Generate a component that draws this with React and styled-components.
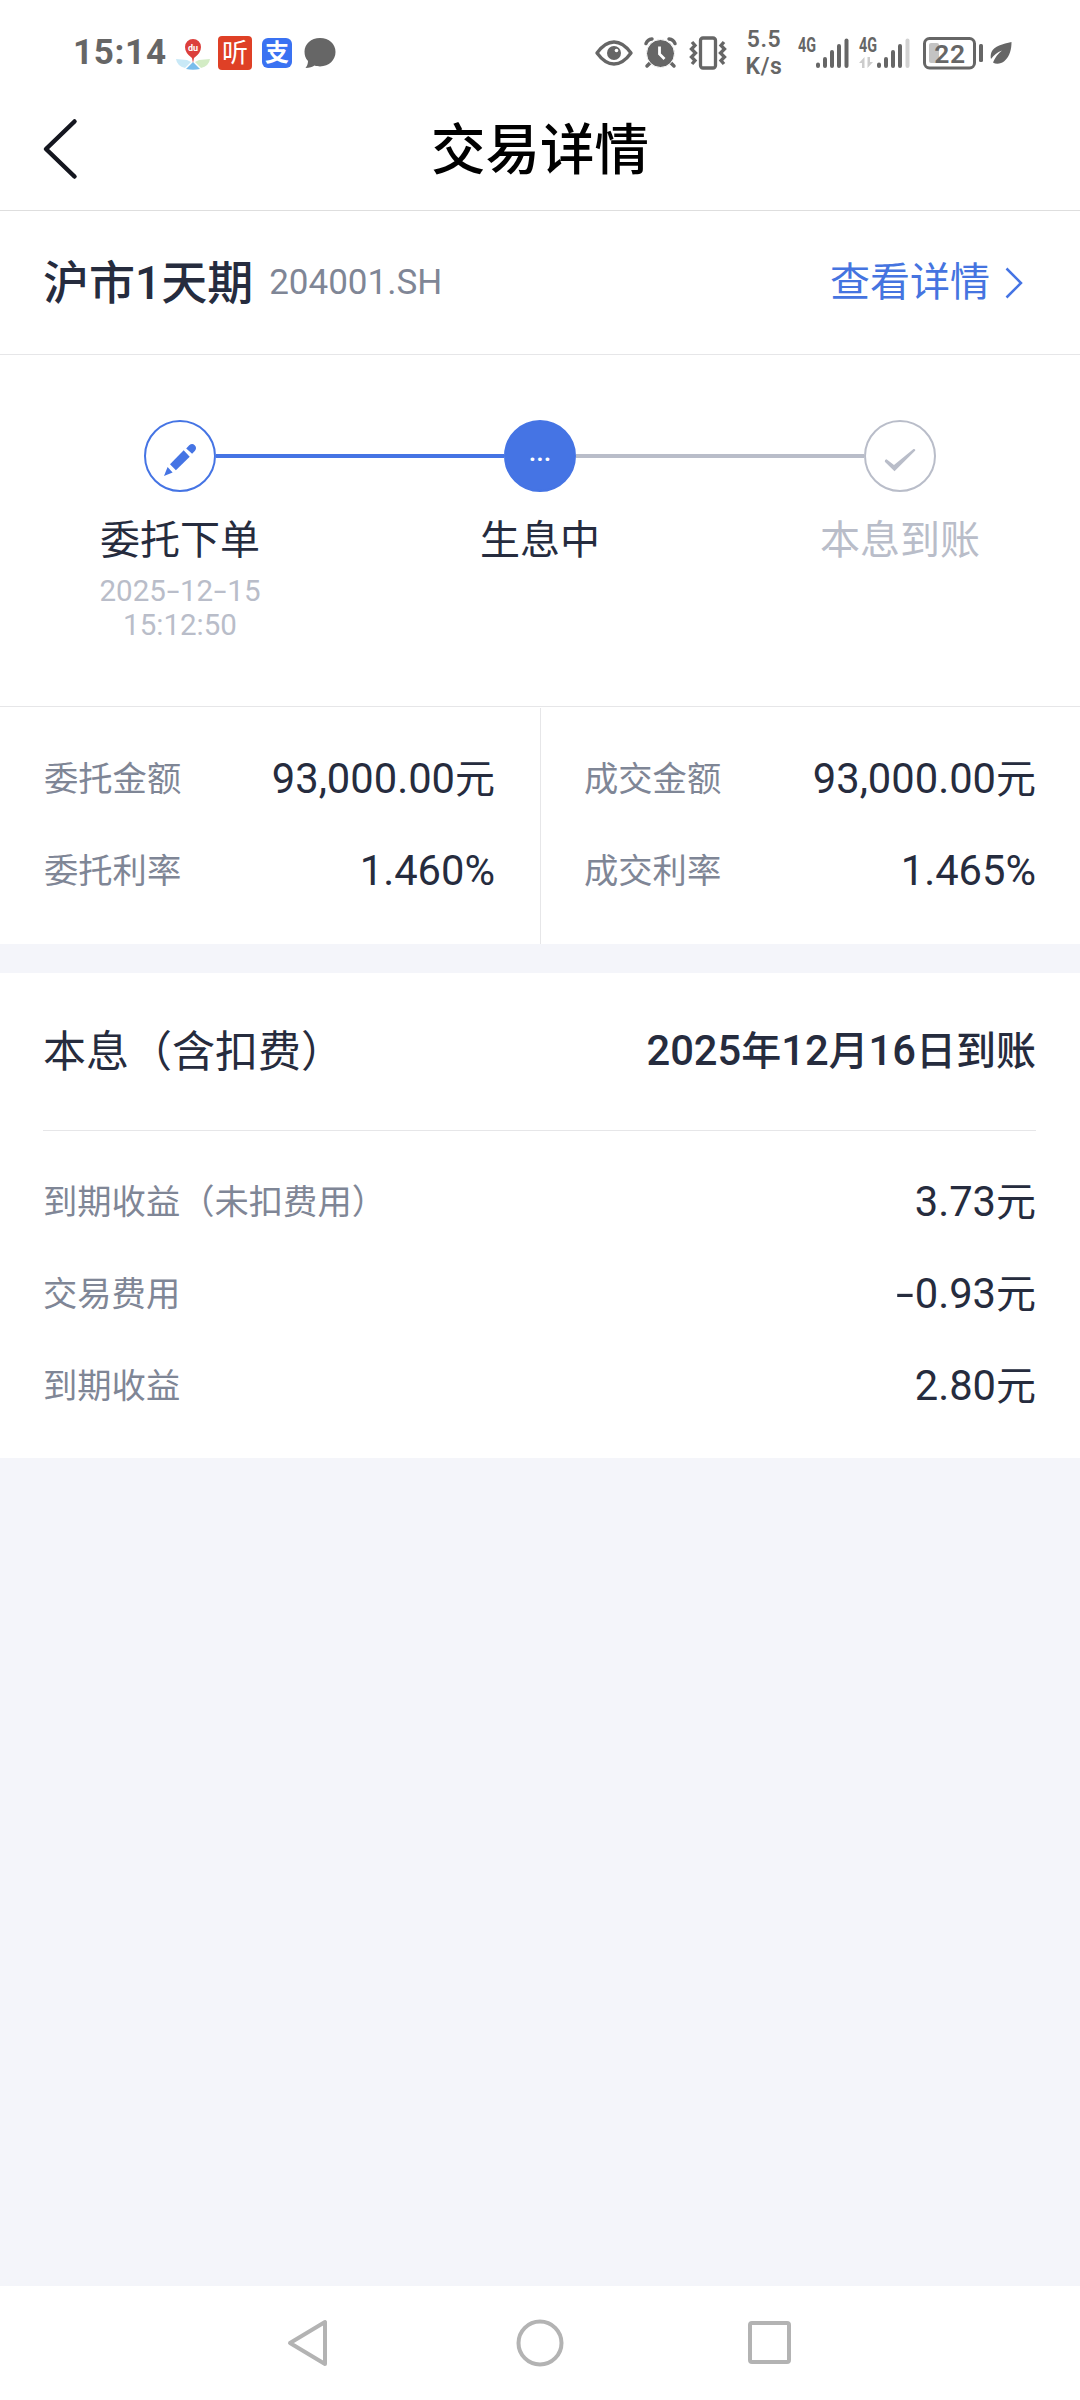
import React from 'react';
import styled, { createGlobalStyle } from 'styled-components';

const GlobalStyle = createGlobalStyle`
  * {
    box-sizing: border-box;
  }
  body {
    margin: 0;
    background: #f4f5fa;
    color: #262c3e;
    font-family: Roboto, 'Noto Sans CJK SC', sans-serif;
  }
  svg {
    display: block;
    flex: none;
    overflow: visible;
  }
`;

// Styled Components
const Page = styled.div`
  display: flex;
  flex-direction: column;
  width: 1080px;
  height: 2400px;
  overflow: hidden;
`;

const StatusBar = styled.div`
  display: flex;
  justify-content: space-between;
  height: 90px;
  padding: 14px 68px 0 73px;
  background: #fff;
  color: #666;
`;

const StatusGroup = styled.div`
  display: flex;
  align-items: center;
  height: 77px;
`;

const Clock = styled.span`
  width: 103px;
  font-size: 35px;
  line-height: 40px;
  font-weight: 700;
  letter-spacing: 0.7px;
  white-space: nowrap;
`;

const AppBadge = styled.span`
  display: flex;
  align-items: center;
  justify-content: center;
  width: ${(props) => props.$size}px;
  height: ${(props) => props.$size}px;
  margin-left: ${(props) => props.$gap}px;
  border-radius: ${(props) => props.$radius}px;
  background: ${(props) => props.$color};
  color: #fff;
  font-size: ${(props) => props.$font}px;
  font-weight: ${(props) => props.$weight};
  line-height: 1;
`;

const NetSpeed = styled.span`
  width: 50px;
  margin-left: 12px;
  font-size: 23px;
  line-height: 27px;
  font-weight: 600;
  letter-spacing: 0.6px;
  text-align: center;
`;

const StatusIcon = styled.svg`
  margin-left: ${(props) => props.$gap || 0}px;
`;

const Header = styled.header`
  display: grid;
  grid-template-columns: 120px 1fr 120px;
  align-items: center;
  height: 121px;
  border-bottom: 1px solid #dedede;
  background: #fff;
`;

const BackButton = styled.button`
  height: 100%;
  padding: 0 0 3px 41px;
  border: none;
  background: none;
`;

const Title = styled.h1`
  margin: 0;
  color: #000;
  font-size: 54.5px;
  line-height: 70px;
  font-weight: 500;
  text-align: center;
`;

const ProductBar = styled.section`
  display: flex;
  align-items: center;
  height: 144px;
  padding: 0 57px 0 43px;
  border-bottom: 1px solid #e6e6e8;
  background: #fff;
`;

const ProductName = styled.h2`
  margin: 0;
  font-size: 46px;
  line-height: 60px;
  font-weight: 500;
`;

const ProductCode = styled.span`
  margin-left: 16px;
  color: #7f8696;
  font-size: 35px;
  line-height: 60px;
`;

const DetailLink = styled.a`
  display: flex;
  align-items: center;
  gap: 15px;
  margin-left: auto;
  color: #4574e0;
  font-size: 40px;
  line-height: 60px;
`;

const Progress = styled.section`
  height: 352px;
  padding-top: 65px;
  border-bottom: 1px solid #e6e6e8;
  background: #fff;
`;

const Track = styled.div`
  display: flex;
  align-items: center;
  padding: 0 144px;
`;

const StepCircle = styled.div`
  display: flex;
  align-items: center;
  justify-content: center;
  width: 72px;
  height: 72px;
  border: 2px solid ${(props) => props.$color};
  border-radius: 50%;
  background: ${(props) => (props.$filled ? props.$color : '#fff')};
`;

const StepDots = styled.span`
  padding-bottom: 8px;
  color: #fff;
  font-size: 27px;
  line-height: 30px;
  font-weight: 500;
`;

const TrackLine = styled.div`
  flex: 1;
  height: 4px;
  background: ${(props) => props.$color};
`;

const StepLabels = styled.div`
  display: grid;
  grid-template-columns: repeat(3, 360px);
  margin-top: 26px;
`;

const StepLabel = styled.div`
  color: ${(props) => (props.$pending ? '#b9bdc9' : '#262c3e')};
  font-size: 40px;
  line-height: 46px;
  text-align: center;
`;

const StepTime = styled.div`
  width: 180px;
  margin: 10px auto 0;
  color: #b9bdc9;
  font-size: 29.5px;
  line-height: 34px;
`;

const Amounts = styled.section`
  display: grid;
  grid-template-columns: 541px 539px;
  height: 237px;
  padding-top: 1px;
  background: #fff;
`;

const AmountColumn = styled.div`
  padding: 25px ${(props) => (props.$divided ? '45px 0 44px' : '44px 0 43px')};
  border-right: ${(props) => (props.$divided ? '1px solid #e6e6e8' : 'none')};
`;

const Settlement = styled.section`
  height: 485px;
  margin-top: 29px;
  padding: 0 44px 0 43px;
  background: #fff;
`;

const SettlementHead = styled.div`
  display: flex;
  align-items: center;
  justify-content: space-between;
  height: 158px;
  border-bottom: 1px solid #e6e6e8;
  line-height: 60px;
`;

const SettlementTitle = styled.h3`
  margin: 0;
  font-size: 43px;
  font-weight: 400;
`;

const SettlementDate = styled.span`
  font-size: 40px;
  font-weight: 500;
`;

const SettlementRows = styled.div`
  padding-top: 25px;
`;

const Row = styled.div`
  display: flex;
  align-items: center;
  justify-content: space-between;
  height: 92px;
  line-height: 60px;
`;

const Label = styled.span`
  color: #7f8696;
  font-size: 34.3px;
`;

const Value = styled.span`
  font-size: 40px;
`;

const Num = styled.span`
  font-size: 41.7px;
`;

// Roboto's hyphen is too short next to the figures
const Dash = styled.span`
  display: inline-block;
  width: 0.48em;
  text-align: center;
  transform: scaleX(1.55);
`;

const NavBar = styled.nav`
  display: flex;
  align-items: center;
  justify-content: center;
  gap: 183px;
  height: 114px;
  margin-top: auto;
  background: #fff;
`;

const blue = '#4574e4';
const grey = '#b9bdc9';

// Icons
const MapIcon = () => (
  <StatusIcon width="34" height="34" viewBox="0 0 34 34">
    <path d="M0 23l11 1 4 2-6 6Q1 30 0 23z" fill="#c9e9f7" />
    <path d="M34 23l-11 1-4 2 6 6q8-2 9-9z" fill="#d3ecc5" />
    <path d="M17 26l7 7q-7 1.500-14 0z" fill="#79bdec" />
    <path d="M17 27l-1-5Q9 17 9 11a8 8 0 0 1 16 0q0 6-7 11z" fill="#dc3f3c" />
    <text x="17" y="14.500" fill="#fff" fontSize="9" fontWeight="700" textAnchor="middle">du</text>
  </StatusIcon>
);

const ChatIcon = () => (
  <StatusIcon $gap={12} width="32" height="32" viewBox="0 0 32 32">
    <path d="M16 1C7 1 .5 7 .5 14.500c0 4 1 7 3.500 9.500 0 3-1 5-2.500 7 4 0 7-1 9-2.500 2 .7 4 .9 5.500.9 9 0 15.500-6.400 15.500-14.400S25 1 16 1z" fill="#666" />
  </StatusIcon>
);

const EyeIcon = () => (
  <StatusIcon width="38" height="26" viewBox="0 0 38 26">
    <path d="M2 13Q10 2 19 2t17 11Q28 24 19 24T2 13z" fill="none" stroke="#666" strokeWidth="3.400" strokeLinejoin="round" />
    <circle cx="19" cy="13" r="7" fill="#666" />
    <circle cx="21.500" cy="10.500" r="1.800" fill="#fff" />
  </StatusIcon>
);

const AlarmIcon = () => (
  <StatusIcon $gap={11} width="33" height="32" viewBox="0 0 33 32">
    <g stroke="#666" strokeWidth="3.500" strokeLinecap="round" fill="none">
      <path d="M6 26l-3 3M27 26l3 3" />
      <path d="M2 6.500Q3.500 2.500 8 2M31 6.500Q29.500 2.500 25 2" />
    </g>
    <circle cx="16.500" cy="16.500" r="14" fill="#666" stroke="#fff" strokeWidth="1" />
    <path d="M15.500 9.500v7.500l5 5" fill="none" stroke="#fff" strokeWidth="2.800" />
  </StatusIcon>
);

const VibrateIcon = () => (
  <StatusIcon $gap={12} width="38" height="34" viewBox="0 0 38 34">
    <g fill="none" stroke="#666" strokeWidth="3.300">
      <rect x="11.500" y="2" width="15" height="30" rx="2.500" />
      <path d="M3 6l3 3.500L2.500 13l4 4-4 4 3.500 3.500-3 3.500" />
      <path d="M35 6l-3 3.500 3.500 3.500-4 4 4 4-3.500 3.500 3 3.500" />
    </g>
  </StatusIcon>
);

const SignalIcon = ({ gap, weak }) => (
  <StatusIcon $gap={gap} width="52" height="34" viewBox="0 0 52 34">
    <text x="0" y="15.500" fill="#666" fontSize="20" fontWeight="700" textLength="18" lengthAdjust="spacingAndGlyphs">4G</text>
    <g stroke="#666" strokeWidth="4" strokeLinecap="round">
      <path d="M20 28.500v1.500M27 23v7M34 16v14M41 10v20" />
      <path d="M48.500 4.500V30" stroke={weak ? '#d2d2d2' : '#666'} />
    </g>
    {weak && (
      <g fill="#ccc">
        <path d="M5.500 21v11H3v-5H0z" />
        <path d="M8.500 32V21H11v5h3z" />
      </g>
    )}
  </StatusIcon>
);

const BatteryIcon = () => (
  <StatusIcon $gap={12} width="61" height="34" viewBox="0 0 61 34">
    <rect x="1.500" y="2.500" width="50" height="29.500" rx="5" fill="#fff" stroke="#666" strokeWidth="3" />
    <rect x="6" y="7" width="10" height="20" rx="2" fill="#c3c3c3" />
    <rect x="56" y="8" width="4" height="18" rx="1.500" fill="#666" />
    <text x="27" y="26.500" fill="#666" fontSize="26.500" fontWeight="600" letterSpacing="0.600" textAnchor="middle">22</text>
  </StatusIcon>
);

const LeafIcon = () => (
  <StatusIcon $gap={6} width="22" height="24" viewBox="0 0 22 24">
    <path d="M21.500 1C13 3 4 5 1.500 11c-1 3-1 5-.5 7 3-4 6-6.500 11-8.500-4 3-7 7-9 12 3 2 8 1.500 11.500-1.500C20 15 21.500 8 21.500 1z" fill="#666" />
  </StatusIcon>
);

const PencilIcon = () => (
  <svg width="68" height="68" viewBox="2 2 68 68" fill={blue}>
    <path d="M20 56l3.600-9 5 5.500z" />
    <path d="M26 44.300l13.700-14 6 6.500-13.800 13.500z" />
    <path d="M42.200 28.500l3-3.200q3-2.600 5.500 0t.3 5.400l-2.900 3z" />
  </svg>
);

const CheckIcon = () => (
  <svg width="68" height="68" viewBox="2 2 68 68" fill={grey}>
    <path d="M22.500 39.200l7.500 5.800L49.500 29q2-.5 1.800 1.500L30.500 51.300 20.800 41.800q-.3-2.500 1.700-2.600z" />
  </svg>
);

const amounts = [
  [
    { label: '委托金额', value: '93,000.00', unit: '元' },
    { label: '委托利率', value: '1.460%' },
  ],
  [
    { label: '成交金额', value: '93,000.00', unit: '元' },
    { label: '成交利率', value: '1.465%' },
  ],
];

const earnings = [
  { label: '到期收益（未扣费用）', value: '3.73', unit: '元' },
  { label: '交易费用', value: '0.93', unit: '元', negative: true },
  { label: '到期收益', value: '2.80', unit: '元' },
];

const DetailRow = ({ label, value, unit, negative }) => (
  <Row>
    <Label>{label}</Label>
    <Value>
      <Num>{negative && <Dash>-</Dash>}{value}</Num>{unit}
    </Value>
  </Row>
);

const App = () => {
  return (
    <>
      <GlobalStyle />
      <Page>
        <StatusBar>
          <StatusGroup>
            <Clock>15:14</Clock>
            <MapIcon />
            <AppBadge $size={34} $gap={8} $radius={4} $color="#df4026" $font={26} $weight={400}>听</AppBadge>
            <AppBadge $size={30} $gap={10} $radius={6} $color="#3a72f2" $font={24} $weight={700}>支</AppBadge>
            <ChatIcon />
          </StatusGroup>
          <StatusGroup>
            <EyeIcon />
            <AlarmIcon />
            <VibrateIcon />
            <NetSpeed>5.5<br />K/s</NetSpeed>
            <SignalIcon gap={9} />
            <SignalIcon gap={9} weak />
            <BatteryIcon />
            <LeafIcon />
          </StatusGroup>
        </StatusBar>

        <Header>
          <BackButton>
            <svg width="38" height="62" viewBox="0 0 38 62">
              <path d="M33.500 3.500L5 31l28.500 27.500" fill="none" stroke="#14161f" strokeWidth="4.500" strokeLinecap="round" strokeLinejoin="round" />
            </svg>
          </BackButton>
          <Title>交易详情</Title>
        </Header>

        <ProductBar>
          <ProductName>沪市1天期</ProductName>
          <ProductCode>204001.SH</ProductCode>
          <DetailLink>
            查看详情
            <svg width="18" height="32" viewBox="0 0 18 32">
              <path d="M1.500 1.500L16 16 1.500 30.500" fill="none" stroke={blue} strokeWidth="2.500" />
            </svg>
          </DetailLink>
        </ProductBar>

        <Progress>
          <Track>
            <StepCircle $color={blue}><PencilIcon /></StepCircle>
            <TrackLine $color={blue} />
            <StepCircle $color={blue} $filled><StepDots>...</StepDots></StepCircle>
            <TrackLine $color={grey} />
            <StepCircle $color={grey}><CheckIcon /></StepCircle>
          </Track>
          <StepLabels>
            <StepLabel>
              委托下单
              <StepTime>
                2025<Dash>-</Dash>12<Dash>-</Dash>15<br />
                15:12:50
              </StepTime>
            </StepLabel>
            <StepLabel>生息中</StepLabel>
            <StepLabel $pending>本息到账</StepLabel>
          </StepLabels>
        </Progress>

        <Amounts>
          {amounts.map((rows, index) => (
            <AmountColumn key={index} $divided={index === 0}>
              {rows.map((row) => <DetailRow key={row.label} {...row} />)}
            </AmountColumn>
          ))}
        </Amounts>

        <Settlement>
          <SettlementHead>
            <SettlementTitle>本息（含扣费）</SettlementTitle>
            <SettlementDate>
              <Num>2025</Num>年<Num>12</Num>月<Num>16</Num>日到账
            </SettlementDate>
          </SettlementHead>
          <SettlementRows>
            {earnings.map((row) => <DetailRow key={row.label} {...row} />)}
          </SettlementRows>
        </Settlement>

        <NavBar>
          <svg width="48" height="48" viewBox="0 0 48 48">
            <path d="M40 3v42L5 24z" fill="none" stroke="#b3b3b3" strokeWidth="4" strokeLinejoin="round" />
          </svg>
          <svg width="48" height="48" viewBox="0 0 48 48">
            <circle cx="24" cy="24" r="21.500" fill="none" stroke="#b3b3b3" strokeWidth="4" />
          </svg>
          <svg width="48" height="48" viewBox="0 0 48 48">
            <rect x="3" y="4" width="39" height="39" rx="2" fill="none" stroke="#b3b3b3" strokeWidth="4" />
          </svg>
        </NavBar>
      </Page>
    </>
  );
};

export default App;
